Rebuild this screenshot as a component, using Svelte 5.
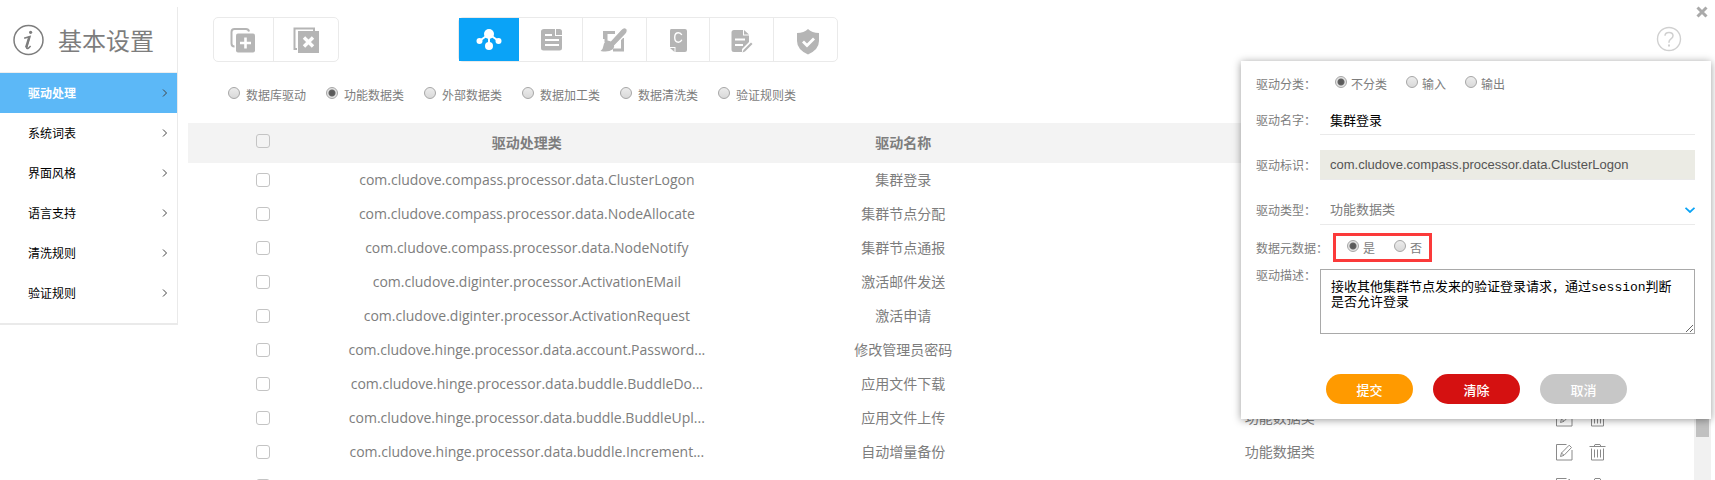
<script>
  const menu = ['驱动处理', '系统词表', '界面风格', '语言支持', '清洗规则', '验证规则'];
  const kinds = ['数据库驱动', '功能数据类', '外部数据类', '数据加工类', '数据清洗类', '验证规则类'];
  const rows = [
    ['com.cludove.compass.processor.data.ClusterLogon', '集群登录'],
    ['com.cludove.compass.processor.data.NodeAllocate', '集群节点分配'],
    ['com.cludove.compass.processor.data.NodeNotify', '集群节点通报'],
    ['com.cludove.diginter.processor.ActivationEMail', '激活邮件发送'],
    ['com.cludove.diginter.processor.ActivationRequest', '激活申请'],
    ['com.cludove.hinge.processor.data.account.Password...', '修改管理员密码'],
    ['com.cludove.hinge.processor.data.buddle.BuddleDo...', '应用文件下载'],
    ['com.cludove.hinge.processor.data.buddle.BuddleUpl...', '应用文件上传', '功能数据类'],
    ['com.cludove.hinge.processor.data.buddle.Increment...', '自动增量备份', '功能数据类'],
    []
  ];
  let kind = $state('功能数据类');
  let category = $state('不分类');
  let meta = $state('是');
  let name = $state('集群登录');
  let description = $state('接收其他集群节点发来的验证登录请求，通过session判断是否允许登录');
</script>

<div class="page">
  <aside>
    <h1>
      <svg width="32" height="32" viewBox="0 0 32 32" fill="none" stroke="#7d7d7d">
        <circle cx="16.5" cy="16" r="14.5" stroke-width="1.5" />
        <circle cx="18.6" cy="8.3" r="1.6" fill="#7d7d7d" stroke="none" />
        <path d="M12.2 14.2c2-.6 3.8-1.2 5.8-1.7l-3.2 10.8c-.4 1.700.8 1.600 1.900.6l1.900-2" stroke-width="1.500" />
        <path d="M17.200 13l-3.200 10.600" stroke-width="2.200" />
      </svg>
      基本设置
    </h1>
    <nav>
      {#each menu as item, i}
        <a href="#{i}" class:active={i === 0}>
          {item}
          <svg width="6" height="10" viewBox="0 0 6 10" fill="none" stroke="#444"><path d="M1 1.500l3.500 3.500L1 8.500" /></svg>
        </a>
      {/each}
    </nav>
  </aside>

  <main>
    <div class="tools">
      <div class="group small">
        <button aria-label="添加">
          <svg viewBox="0 0 30 30">
            <path d="M5.500 21.500q-3 0-3-3V7q0-3 3-3H17q2.500 0 3 2.500" fill="none" stroke="#b5b5b5" stroke-width="2" />
            <rect x="7" y="8.500" width="19" height="19" rx="2" fill="#b5b5b5" />
            <path d="M16.500 12.500v11M11 18h11" stroke="#fff" stroke-width="2.600" />
          </svg>
        </button>
        <button aria-label="删除">
          <svg viewBox="0 0 30 30">
            <path d="M6 24H3.500V3.500H23V6" fill="none" stroke="#b5b5b5" stroke-width="2" />
            <rect x="7" y="6" width="21" height="22" fill="#b5b5b5" />
            <path d="M13 12.500l9 9M22 12.500l-9 9" stroke="#fff" stroke-width="3.400" />
          </svg>
        </button>
      </div>
      <div class="group large">
        <button class="on" aria-label="驱动">
          <svg viewBox="0 0 30 30">
            <path d="M15 9L5.500 16M15 9l9.500 7M15 9v12" stroke="#fff" stroke-width="2" />
            <g fill="#fff"><circle cx="15" cy="9" r="5" /><circle cx="5.500" cy="16" r="3" /><circle cx="24.500" cy="16" r="3" /><circle cx="15" cy="21" r="4" /></g>
          </svg>
        </button>
        <button aria-label="文档">
          <svg viewBox="0 0 30 30">
            <path d="M9 4h11v7h7v12q0 2.500-2.500 2.500H8.500Q6 25.500 6 23V6.500Q6 4 9 4zM21 4h3.500Q27 4 27 6.500V10h-6z" fill="#b5b5b5" />
            <path d="M10 10h7M10 15h14M10 20h14" stroke="#fff" stroke-width="1.800" />
          </svg>
        </button>
        <button aria-label="样式">
          <svg viewBox="0 0 30 30">
            <path d="M5.500 14V7.500H16M7 7.500V17M23.500 13v12H14" fill="none" stroke="#b5b5b5" stroke-width="3" />
            <path d="M27.500 3.500q-2.500-2-5.500 1L10 17.500l4.500 4.500L26.500 9.500q3-3.500 1-6z" fill="#b5b5b5" stroke="#fff" stroke-width="1.200" />
            <path d="M8.500 15.500q-3.500 1-4 5t-3 5.500q8 1.500 12-1.500 3-3 .5-6-2.500-3-5.500-3z" fill="#b5b5b5" />
          </svg>
        </button>
        <button aria-label="类">
          <svg viewBox="0 0 30 30">
            <path d="M8 4h14q2 0 2 2v19q0 2-2 2h-9.500v-5H7V6q0-2 1-2zM7 23h4.500v4z" fill="#b5b5b5" />
            <path d="M18.800 10q-1-2.200-3.300-2.200c-2.200 0-3.800 1.700-3.800 4.700s1.600 4.700 3.800 4.700q2.300 0 3.300-2.400" fill="none" stroke="#fff" stroke-width="1.400" />
          </svg>
        </button>
        <button aria-label="编辑">
          <svg viewBox="0 0 30 30">
            <path d="M7 5h9v5.500h6V17l-7 7v3H7q-2.500 0-2.500-2.500v-17Q4.500 5 7 5zM17 5l5 4.500h-5z" fill="#b5b5b5" />
            <path d="M8 14.500h10M8 20h8" stroke="#fff" stroke-width="1.800" />
            <path d="M25.500 19L18 26.500l-2.500 1 1-2.500L24 17.500z" fill="#b5b5b5" />
          </svg>
        </button>
        <button aria-label="验证">
          <svg viewBox="0 0 30 30">
            <path d="M17 4q4 4 11 4v8q0 8.500-11 13.500Q6 24.500 6 16V8q7 0 11-4z" fill="#b5b5b5" />
            <path d="M12 16.500l4 4 7-7" fill="none" stroke="#fff" stroke-width="2.800" />
          </svg>
        </button>
      </div>
    </div>

    <div class="kinds">
      {#each kinds as k}
        <label><input type="radio" name="kind" value={k} bind:group={kind} /><span>{k}</span></label>
      {/each}
    </div>

    <div class="list">
      <div class="scroll">
        <table>
          <thead>
            <tr>
              <th class="pick"><input type="checkbox" aria-label="全选" /></th>
              <th>驱动处理类</th><th>驱动名称</th><th></th><th class="ops"></th>
            </tr>
          </thead>
          <tbody>
            {#each rows as [cls, title, type]}
              <tr>
                <td><input type="checkbox" aria-label="选择" /></td>
                <td>{cls ?? ''}</td>
                <td>{title ?? ''}</td>
                <td>{type ?? ''}</td>
                <td>
                  <div class="actions">
                    <button aria-label="修改">
                      <svg width="17" height="17" viewBox="0 0 17 17" fill="none" stroke="#8a8a8a">
                        <path d="M10.500.500H.5v15.500h15.500V6M4.500 12.500l1-3.500L13.200 1.200l2.300 2.300L8 11.300zM5.500 9L8 11.300" />
                      </svg>
                    </button>
                    <button aria-label="移除">
                      <svg width="17" height="17" viewBox="0 0 17 17" fill="none" stroke="#8a8a8a">
                        <path d="M.5 2.500h16M5 2.500l1-2h5l1 2M2.500 4.500v11.500h12V4.500M5.500 5.500v8M8.500 5.500v8M11.500 5.500v8" />
                      </svg>
                    </button>
                  </div>
                </td>
              </tr>
            {/each}
          </tbody>
        </table>
      </div>
      <div class="track"><div class="thumb"></div></div>
    </div>
  </main>

  <button class="close" aria-label="关闭">
    <svg width="12" height="12" viewBox="0 0 12 12"><path d="M1.500 1.500l9 9M10.500 1.500l-9 9" stroke="#aaa" stroke-width="3" /></svg>
  </button>
  <button class="help" aria-label="帮助">
    <svg width="26" height="26" viewBox="0 0 26 26" fill="none" stroke="#d0d0d0">
      <circle cx="13" cy="13" r="11.500" stroke-width="1.400" />
      <path d="M9 9.800Q9 6.500 13 6.500t4 3.300q0 1.700-2 3t-2 3.200v.8" stroke-width="1.500" />
      <path d="M12 19.500h2" stroke-width="2" />
    </svg>
  </button>

  <form class="panel">
    <div class="row">
      <span class="cap">驱动分类：</span>
      <div class="options">
        {#each ['不分类', '输入', '输出'] as c}
          <label><input type="radio" name="category" value={c} bind:group={category} /><span>{c}</span></label>
        {/each}
      </div>
    </div>
    <div class="row name">
      <label class="cap" for="name">驱动名字：</label>
      <input id="name" class="field" type="text" bind:value={name} />
    </div>
    <div class="row gap">
      <label class="cap" for="ident">驱动标识：</label>
      <input id="ident" class="field ident" type="text" value="com.cludove.compass.processor.data.ClusterLogon" readonly />
    </div>
    <div class="row gap">
      <label class="cap" for="type">驱动类型：</label>
      <div class="select">
        <select id="type" class="field"><option>功能数据类</option></select>
        <svg width="10" height="6" viewBox="0 0 10 6" fill="none" stroke="#0aa3f5" stroke-width="1.800"><path d="M.5.800L5 5 9.500.800" /></svg>
      </div>
    </div>
    <div class="row meta">
      <span class="cap">数据元数据：</span>
      <div class="options marked">
        {#each ['是', '否'] as m}
          <label><input type="radio" name="meta" value={m} bind:group={meta} /><span>{m}</span></label>
        {/each}
      </div>
    </div>
    <div class="row desc">
      <label class="cap" for="desc">驱动描述：</label>
      <textarea id="desc" bind:value={description}></textarea>
    </div>
    <div class="buttons">
      <button type="button" class="submit">提交</button>
      <button type="button" class="clear">清除</button>
      <button type="button" class="cancel">取消</button>
    </div>
  </form>
</div>

<style>
  :global(body) { background: #fff; }
  .page, .page :global(*) { box-sizing: border-box; }
  .page {
    position: relative;
    display: flex;
    align-items: flex-start;
    height: 100vh;
    overflow: hidden;
    padding-right: 4px;
    font: 12px "Open Sans", "Noto Sans CJK SC", sans-serif;
    color: #7d7d7d;
  }
  button { border: 0; padding: 0; background: none; font: inherit; cursor: pointer; }
  svg { display: block; flex: none; }

  aside {
    width: 178px;
    flex: none;
    margin-top: 7px;
    border-right: 1px solid #eaeaea;
    border-bottom: 2px solid #eaeaea;
  }
  h1 {
    display: flex;
    align-items: center;
    gap: 14px;
    height: 66px;
    margin: 0;
    padding: 0 0 0 12px;
    border-bottom: 1px solid #eee;
    font-size: 24px;
    font-weight: 400;
  }
  nav { padding-bottom: 10px; }
  nav a {
    display: flex;
    align-items: center;
    justify-content: space-between;
    height: 40px;
    padding: 0 9px 0 28px;
    color: #000;
    text-decoration: none;
  }
  nav a.active { background: #5cb8f7; color: #fff; font-weight: 700; }

  main {
    flex: 1;
    min-width: 0;
    height: 100%;
    display: flex;
    flex-direction: column;
    padding-left: 10px;
  }
  .tools { display: flex; gap: 119px; padding: 17px 0 0 25px; }
  .group { display: flex; height: 45px; border: 1px solid #eaeaea; border-radius: 5px; }
  .group button { flex: 1; display: flex; align-items: center; justify-content: center; border-left: 1px solid #eaeaea; }
  .group button:first-child { flex: 0 0 60px; border-left: 0; }
  .group.small button:first-child { flex-basis: 59px; }
  .group svg { width: 30px; height: 30px; }
  .small { width: 126px; }
  .large { width: 380px; }
  .group button.on { background: #0aa3f7; }
  .group .on + button { border-left: 0; }

  .kinds { display: flex; gap: 20px; height: 61px; padding: 5px 0 0 40px; align-items: center; }
  .kinds label { display: flex; align-items: center; gap: 6px; }
  input[type='radio'] {
    appearance: none;
    width: 12px;
    height: 12px;
    margin: 0 0 4px;
    border: 1px solid #a6a6a6;
    border-radius: 50%;
    background: linear-gradient(#ececec, #d9d9d9);
  }
  input[type='radio']:checked {
    background: radial-gradient(circle, #5a5a5a 0 2px, #666 3px, #e3e3e3 4px);
  }
  input[type='checkbox'] {
    appearance: none;
    display: block;
    width: 14px;
    height: 14px;
    margin: 0 auto;
    border: 1px solid #c4c4c4;
    border-radius: 3px;
    background: #fff;
  }
  thead input[type='checkbox'] { background: none; }

  .list { display: flex; flex: 1; min-height: 0; overflow: hidden; align-items: flex-start; }
  .scroll { flex: 1; min-width: 0; }
  table { width: 100%; table-layout: fixed; border-collapse: collapse; font-size: 14px; line-height: 20px; }
  .pick { width: 10%; }
  .ops { width: 15%; }
  th { height: 40px; padding: 0; background: #f3f3f3; }
  th.pick { padding-bottom: 4px; }
  td { height: 34px; padding: 0; text-align: center; white-space: nowrap; }
  .actions { display: flex; justify-content: center; gap: 16px; }
  .track { width: 17px; height: 100%; background: #f1f1f1; padding: 57px 2px 0; }
  .thumb { height: 257px; background: #c1c1c1; }

  .close { position: absolute; top: 6px; right: 7px; }
  .help { position: absolute; top: 26px; right: 33px; }

  .panel {
    position: absolute;
    top: 61px;
    right: 4px;
    width: 470px;
    padding: 8px 16px 15px 15px;
    background: #fff;
    box-shadow: 0 1px 8px rgba(0, 0, 0, 0.4);
  }
  .row { display: grid; grid-template-columns: 64px 1fr; align-items: center; min-height: 30px; }
  .name { margin-top: 6px; }
  .gap { margin-top: 15px; }
  .cap { white-space: nowrap; }
  .options { display: flex; align-items: center; gap: 19px; padding-left: 15px; }
  .options label { display: flex; align-items: center; gap: 4px; }
  .meta { margin-top: 8px; min-height: 29px; }
  .marked { justify-self: start; height: 29px; margin-left: 13px; padding: 0 7px 0 11px; border: 3px solid #fb3a3a; }
  .field {
    appearance: none;
    width: 100%;
    height: 30px;
    padding: 0 10px;
    border: 0;
    border-bottom: 1px solid #eaeaea;
    border-radius: 0;
    background: #fff;
    font: 13px "Liberation Sans", "Noto Sans CJK SC", sans-serif;
    color: #000;
    outline: 0;
  }
  .ident { background: #ebebe4; color: #545454; }
  select.field { color: #7d7d7d; }
  .select { display: grid; grid-template-columns: 1fr; align-items: center; }
  .select > * { grid-area: 1 / 1; }
  .select svg { justify-self: end; pointer-events: none; }
  .desc { margin-top: 7px; align-items: start; }
  .desc .cap { line-height: 14px; }
  textarea {
    display: block;
    width: 100%;
    height: 65px;
    padding: 10px;
    border: 1px solid #a9a9a9;
    font: 13px/15px "Liberation Mono", "Noto Sans CJK SC", monospace;
    color: #000;
    outline: 0;
  }
  .buttons { display: flex; gap: 20px; margin: 40px 0 0 70px; }
  .buttons button { width: 87px; height: 30px; border-radius: 15px; color: #fff; font-size: 13px; font-weight: 500; }
  .submit { background: #ff9a00; }
  .clear { background: #d51111; }
  .cancel { background: #c7c7c7; }
</style>
